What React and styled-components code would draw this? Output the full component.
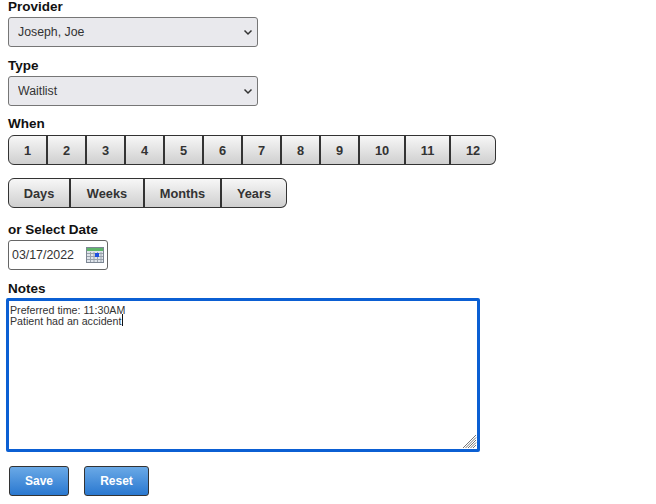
import styled, { createGlobalStyle } from "styled-components";

const GlobalStyle = createGlobalStyle`
  html, body {
    margin: 0;
    padding: 0;
    background: #fff;
    font-family: "Liberation Sans", Arial, sans-serif;
    overflow: hidden;
  }
`;

const Form = styled.form`
  width: 656px;
  height: 504px;
  box-sizing: border-box;
  padding: 0 0 0 8px;
  display: flex;
  flex-direction: column;
  align-items: flex-start;
`;

const Label = styled.label`
  display: block;
  height: 14px;
  line-height: 14px;
  margin-top: ${(p) => p.$top}px;
  margin-bottom: ${(p) => p.$bottom || 3}px;
  font-size: 13.5px;
  font-weight: bold;
  color: #111;
`;

const SelectWrap = styled.div`
  position: relative;
  width: 250px;
  height: 30px;
`;

const Select = styled.select`
  appearance: none;
  display: block;
  width: 100%;
  height: 100%;
  box-sizing: border-box;
  padding: 0 0 0 9px;
  border: 1px solid #767676;
  border-radius: 3px;
  background: #e9e9ed;
  font-family: inherit;
  font-size: 12.3px;
  color: #333;
  outline: none;
`;

const Chevron = styled.svg`
  position: absolute;
  right: 5px;
  top: 11px;
  width: 10px;
  height: 8px;
  pointer-events: none;
`;

const Segments = styled.div`
  display: flex;
  height: 30px;
  margin-top: ${(p) => p.$top || 0}px;
`;

const Segment = styled.button`
  width: ${(p) => p.$width}px;
  height: 30px;
  box-sizing: border-box;
  padding: 0;
  margin-left: -1px;
  border: 1px solid #333;
  border-left-width: 2px;
  background: linear-gradient(#f7f7f7, #cfcfcf);
  font-family: inherit;
  font-size: 12.8px;
  font-weight: bold;
  color: #333;
  &:first-child {
    margin-left: 0;
    border-left-width: 1px;
    border-radius: 6px 0 0 6px;
  }
  &:last-child {
    border-radius: 0 6px 6px 0;
  }
`;

const DateBox = styled.div`
  display: flex;
  align-items: center;
  justify-content: space-between;
  width: 100px;
  height: 30px;
  box-sizing: border-box;
  padding: 0 3px;
  border: 1px solid #666;
  border-radius: 3px;
`;

const DateInput = styled.input`
  width: 68px;
  padding: 0;
  border: 0;
  outline: none;
  font-family: inherit;
  font-size: 12.4px;
  color: #333;
`;

const NotesWrap = styled.div`
  position: relative;
  width: 474px;
  height: 154px;
  margin-left: -2px;
`;

const Notes = styled.textarea`
  display: block;
  width: 100%;
  height: 100%;
  box-sizing: border-box;
  margin: 0;
  padding: 4px 1px;
  border: 3px solid #0b5fd3;
  border-radius: 2px;
  outline: none;
  resize: none;
  caret-color: transparent;
  font-family: inherit;
  font-size: 10.67px;
  line-height: 11px;
  color: #333;
`;

const Caret = styled.span`
  position: absolute;
  left: 116px;
  top: 16px;
  width: 1px;
  height: 12px;
  background: #111;
`;

const Grip = styled.svg`
  position: absolute;
  right: 3px;
  bottom: 3px;
  width: 15px;
  height: 15px;
  pointer-events: none;
`;

const Actions = styled.div`
  display: flex;
  gap: 15px;
  margin: 14px 0 0 1px;
`;

const ActionButton = styled.button`
  width: ${(p) => p.$width}px;
  height: 30px;
  padding: 0;
  border: 1px solid #333;
  border-radius: 3px;
  background: linear-gradient(#6aa9e6, #2a78d0);
  font-family: inherit;
  font-size: 12px;
  font-weight: bold;
  color: #fff;
`;

const numbers = [
  ["1", 39], ["2", 40], ["3", 40], ["4", 40], ["5", 40], ["6", 40],
  ["7", 40], ["8", 40], ["9", 40], ["10", 47], ["11", 46], ["12", 47],
];

const units = [
  ["Days", 62], ["Weeks", 75], ["Months", 78], ["Years", 67],
];

function ChevronIcon() {
  return (
    <Chevron viewBox="0 0 10 8">
      <path d="M1.5 2.5L5 6l3.5-3.5" fill="none" stroke="#333" strokeWidth="1.5" />
    </Chevron>
  );
}

function CalendarIcon() {
  return (
    <svg width="18" height="16" viewBox="0 0 18 16">
      <rect x="0.5" y="0.5" width="17" height="15" fill="#dfe4ea" stroke="#7d8794" />
      <rect x="1" y="1" width="16" height="3" fill="#5fb56a" />
      <path
        d="M1 6.5h16M1 9.5h16M1 12.5h16M4.5 5v10M8 5v10M11.5 5v10M15 5v10"
        stroke="#9aa3ad"
        strokeWidth="1"
      />
      <rect x="9" y="6" width="4" height="4" fill="#1b4fe0" />
    </svg>
  );
}

function GripIcon() {
  return (
    <Grip viewBox="0 0 15 15">
      <path
        d="M1 14L14 1M3.5 14L14 3.5M6 14L14 6M8.5 14L14 8.5M11 14l3-3"
        stroke="#777"
        strokeWidth="1"
        fill="none"
      />
    </Grip>
  );
}

export default function App() {
  return (
    <>
      <GlobalStyle />
      <Form onSubmit={(e) => e.preventDefault()}>
        <Label $top={0}>Provider</Label>
        <SelectWrap>
          <Select defaultValue="joe">
            <option value="joe">Joseph, Joe</option>
          </Select>
          <ChevronIcon />
        </SelectWrap>

        <Label $top={12}>Type</Label>
        <SelectWrap>
          <Select defaultValue="waitlist">
            <option value="waitlist">Waitlist</option>
          </Select>
          <ChevronIcon />
        </SelectWrap>

        <Label $top={11} $bottom={4}>When</Label>
        <Segments>
          {numbers.map(([text, width]) => (
            <Segment type="button" key={text} $width={width}>{text}</Segment>
          ))}
        </Segments>

        <Segments $top={13}>
          {units.map(([text, width]) => (
            <Segment type="button" key={text} $width={width}>{text}</Segment>
          ))}
        </Segments>

        <Label $top={15} $bottom={3}>or Select Date</Label>
        <DateBox>
          <DateInput defaultValue="03/17/2022" />
          <CalendarIcon />
        </DateBox>

        <Label $top={12} $bottom={2}>Notes</Label>
        <NotesWrap>
          <Notes defaultValue={"Preferred time: 11:30AM\nPatient had an accident"} />
          <Caret />
          <GripIcon />
        </NotesWrap>

        <Actions>
          <ActionButton type="submit" $width={60}>Save</ActionButton>
          <ActionButton type="reset" $width={65}>Reset</ActionButton>
        </Actions>
      </Form>
    </>
  );
}
